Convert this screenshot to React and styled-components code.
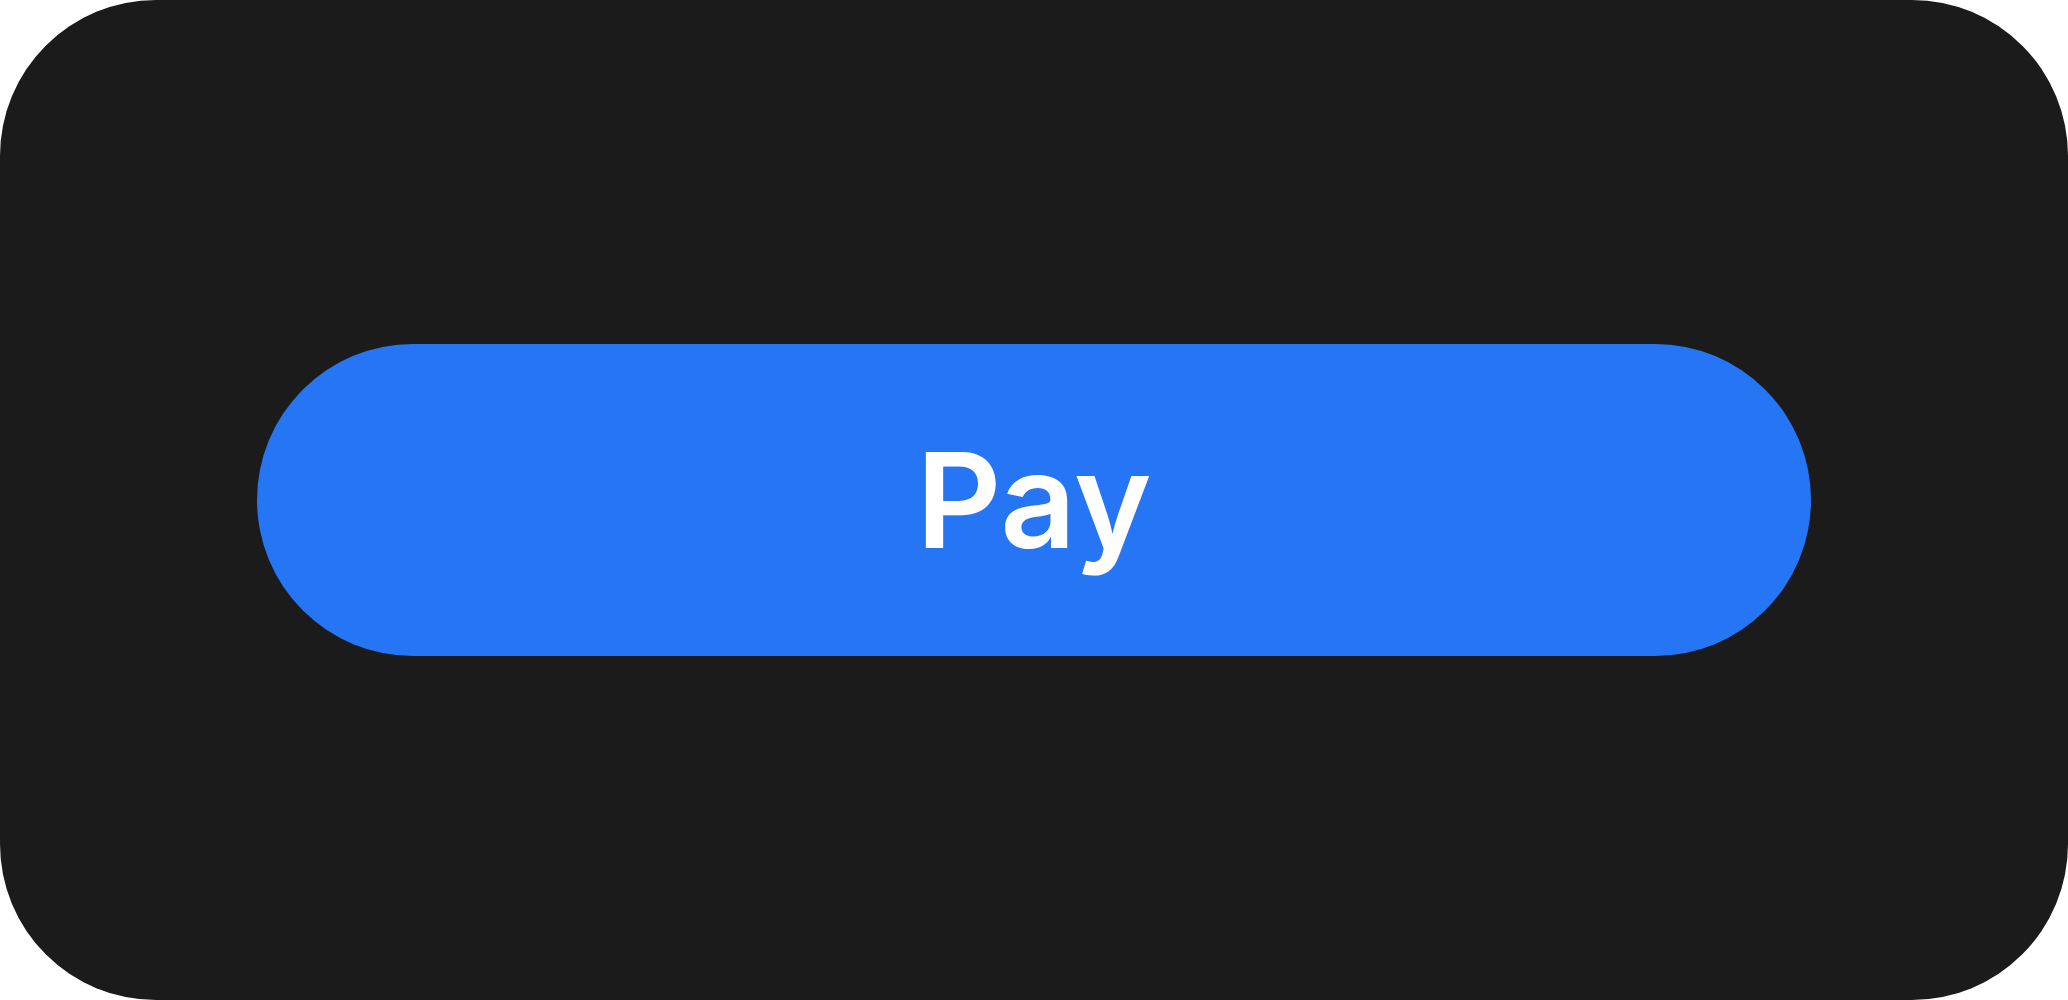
import React from "react";
import styled, { createGlobalStyle } from "styled-components";

const GlobalStyle = createGlobalStyle`
  html, body {
    margin: 0;
    padding: 0;
    background: #ffffff;
  }
  #root {
    width: 100vw;
    height: 100vh;
  }
`;

const Card = styled.div`
  box-sizing: border-box;
  width: 100%;
  height: 100%;
  background: #1b1b1b;
  border-radius: 156px;
  display: flex;
  align-items: center;
  justify-content: center;
`;

const PayButton = styled.button`
  width: 1554px;
  height: 312px;
  border: none;
  outline: none;
  border-radius: 156px;
  background: #2675f5;
  color: #ffffff;
  font-family: Inter, "Noto Sans", sans-serif;
  font-weight: 600;
  font-size: 132px;
  line-height: 1;
  display: flex;
  align-items: center;
  justify-content: center;
  padding: 0;
  cursor: pointer;
`;

export default function App() {
  return (
    <>
      <GlobalStyle />
      <Card>
        <PayButton>Pay</PayButton>
      </Card>
    </>
  );
}
